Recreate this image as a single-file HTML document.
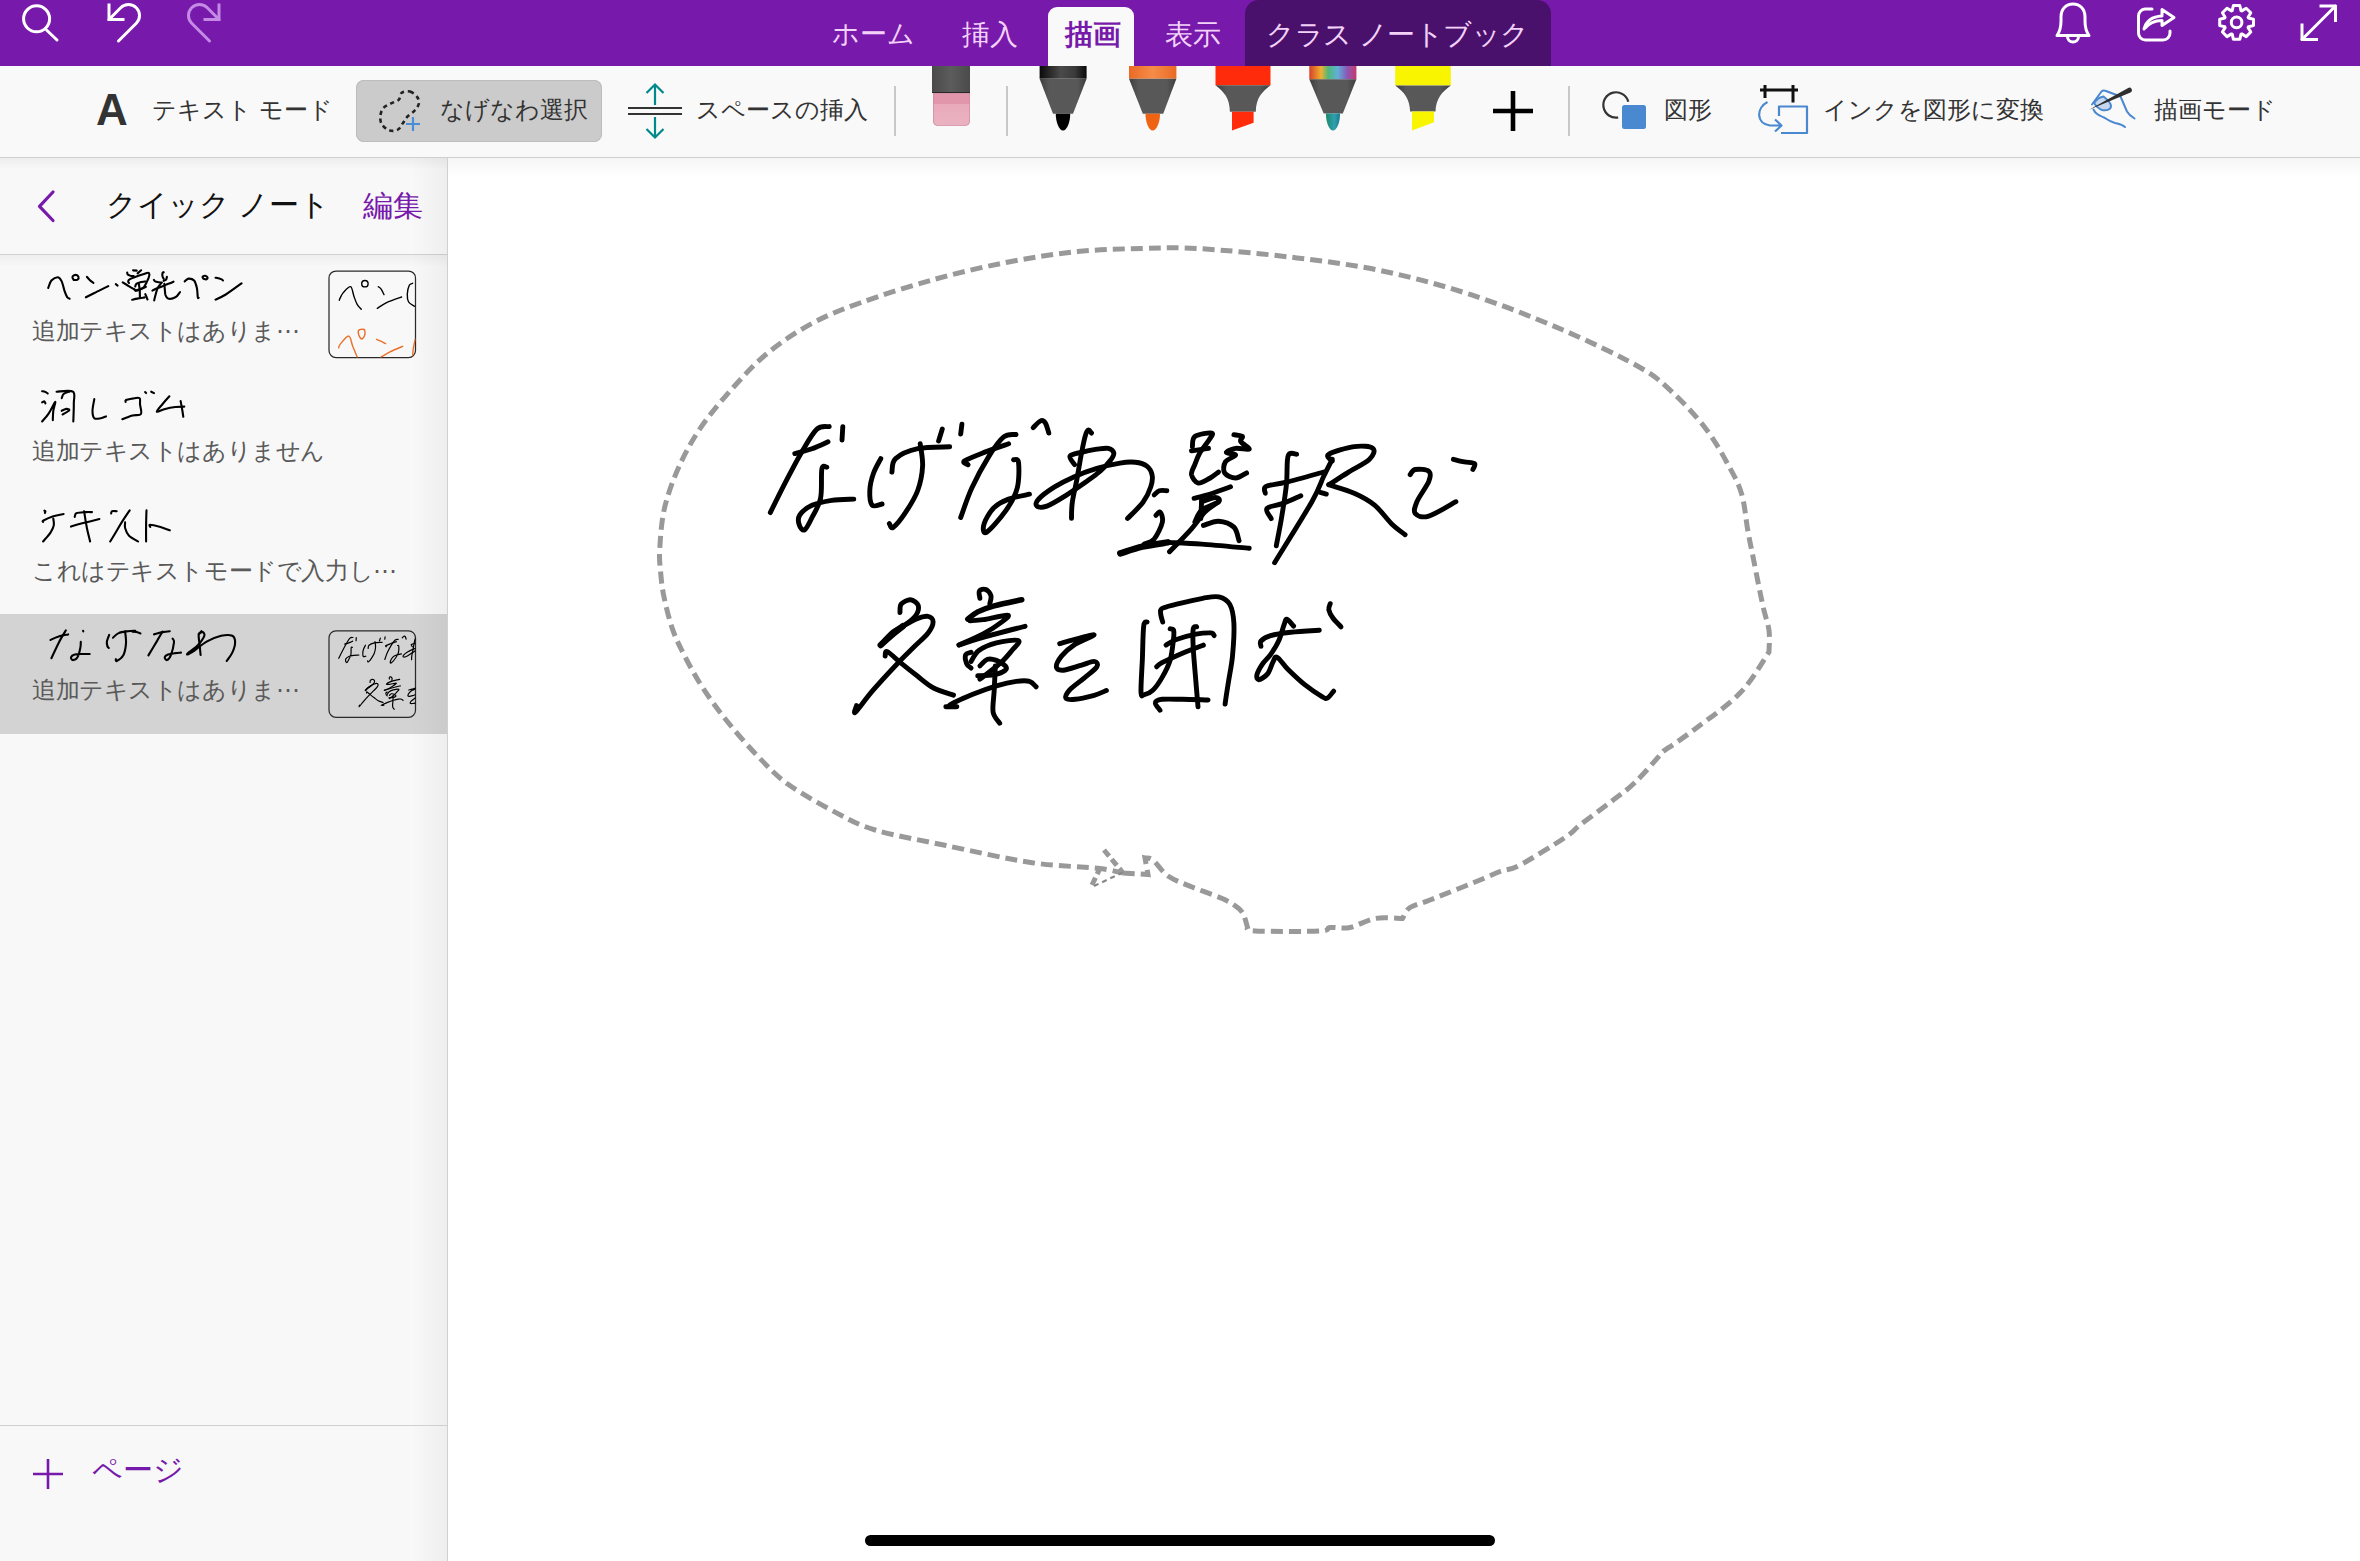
<!DOCTYPE html>
<html lang="ja">
<head>
<meta charset="utf-8">
<style>
html,body{margin:0;padding:0;width:2360px;height:1561px;overflow:hidden;background:#fff;font-family:"Liberation Sans",sans-serif;}
.abs{position:absolute;}
.t{position:absolute;white-space:nowrap;line-height:1;}
#top{left:0;top:0;width:2360px;height:66px;background:#7719aa;}
#tb{left:0;top:66px;width:2360px;height:91px;background:#f9f9f9;}
#tbline{left:0;top:157px;width:2360px;height:1px;background:#cfcfcf;}
#side{left:0;top:158px;width:447px;height:1403px;background:#f8f8f8;}
#sideborder{left:447px;top:158px;width:1px;height:1403px;background:#d0d0d0;}
.tab{font-size:28px;color:#f3d2fa;top:21px;}
.tl{font-size:24px;color:#333;top:98px;}
.sub{font-size:24px;color:#5a5a5a;left:32px;letter-spacing:-0.42px;}
svg{position:absolute;overflow:visible;}
</style>
</head>
<body>
<div id="top" class="abs"></div>
<div class="abs" style="left:1245px;top:0;width:306px;height:66px;background:#4a116c;border-radius:14px 14px 0 0;"></div>
<div class="abs" style="left:1048px;top:7px;width:86px;height:59px;background:#f9f9f9;border-radius:9px 9px 0 0;"></div>
<div class="t tab" style="left:832px;font-size:27px;">ホーム</div>
<div class="t tab" style="left:962px;">挿入</div>
<div class="t tab" style="left:1065px;color:#7719aa;font-weight:700;">描画</div>
<div class="t tab" style="left:1165px;">表示</div>
<div class="t tab" style="left:1266px;font-size:27.5px;letter-spacing:-0.5px;">クラス ノートブック</div>

<!-- top icons -->
<svg width="2360" height="66" style="left:0;top:0" fill="none" stroke="#fff" stroke-width="3" stroke-linecap="round">
  <circle cx="36.6" cy="18.8" r="13"/>
  <path d="M46.5 30 L57 40"/>
  <path d="M109 3.5 V19.5 H124.5" stroke-linecap="butt"/>
  <path d="M109 19.5 L120.7 7.7 A11 11 0 0 1 136.3 23.3 L118.5 41"/>
  <g stroke="#c48ae6">
  <path d="M219 3.5 V19.5 H203.5" stroke-linecap="butt"/>
  <path d="M219 19.5 L207.3 7.7 A11 11 0 0 0 191.7 23.3 L209.5 41"/>
  </g>
</svg>

<svg width="2360" height="66" style="left:0;top:0" fill="none" stroke="#fff" stroke-width="3" stroke-linecap="round" stroke-linejoin="round">
  <path d="M2057 35.5 C2059.5 32 2061 28 2061 21 V17 C2061 9 2066 4 2073 4 C2080 4 2085 9 2085 17 V21 C2085 28 2086.5 32 2089 35.5 Z"/>
  <path d="M2067.5 36.5 A5.5 5.5 0 0 0 2078.5 36.5"/>
  <path d="M2152 9 H2145 A7 7 0 0 0 2138.5 16 V33 A7 7 0 0 0 2145.5 40 H2163 A7 7 0 0 0 2170 33 V31"/>
  <path d="M2144 29 C2146 21.5 2152 16.5 2162 16 V9.5 L2174 17.5 L2162 25.5 V20.5 C2155 20.5 2149 23 2144 29 Z"/>
  <path d="M2232.2 10.6 L2233.4 5.5 L2239.8 5.5 L2241.0 10.6 L2241.8 10.9 L2246.2 8.2 L2250.8 12.8 L2248.1 17.2 L2248.4 18.0 L2253.5 19.2 L2253.5 25.6 L2248.4 26.8 L2248.1 27.6 L2250.8 32.0 L2246.2 36.6 L2241.8 33.9 L2241.0 34.2 L2239.8 39.3 L2233.4 39.3 L2232.2 34.2 L2231.4 33.9 L2227.0 36.6 L2222.4 32.0 L2225.1 27.6 L2224.8 26.8 L2219.7 25.6 L2219.7 19.2 L2224.8 18.0 L2225.1 17.2 L2222.4 12.8 L2227.0 8.2 L2231.4 10.9 Z"/>
  <circle cx="2236.6" cy="22.4" r="5.3"/>
  <path d="M2302 39.5 L2335.5 6"/>
  <path d="M2319.5 6 H2335.5 V22" stroke-linecap="butt"/>
  <path d="M2302 23.5 V39.5 H2318" stroke-linecap="butt"/>
</svg>
<div id="tb" class="abs"></div>
<div id="tbline" class="abs"></div>
<div id="side" class="abs"></div>
<div id="sideborder" class="abs"></div>
<div class="abs" style="left:448px;top:158px;width:1912px;height:20px;background:linear-gradient(180deg,rgba(0,0,0,0.035),rgba(0,0,0,0));"></div>
<div class="abs" style="left:0;top:158px;width:447px;height:12px;background:linear-gradient(180deg,rgba(0,0,0,0.045),rgba(0,0,0,0));"></div>
<div class="abs" style="left:0;top:255px;width:447px;height:12px;background:linear-gradient(180deg,rgba(0,0,0,0.04),rgba(0,0,0,0));"></div>


<!-- toolbar -->
<div class="t" style="left:96px;top:88px;font-size:44px;font-weight:700;color:#333;">A</div>
<div class="t tl" style="left:152px;">テキスト モード</div>
<div class="abs" style="left:356px;top:80px;width:246px;height:62px;background:#cbcbcb;border-radius:8px;box-shadow:inset 0 0 0 1px #bdbdbd;"></div>
<div class="t tl" style="left:440px;">なげなわ選択</div>
<div class="t tl" style="left:696px;">スペースの挿入</div>
<div class="t tl" style="left:1664px;">図形</div>
<div class="t tl" style="left:1823px;">インクを図形に変換</div>
<div class="t tl" style="left:2154px;">描画モード</div>


<svg width="2360" height="160" style="left:0;top:0" fill="none">
  <!-- lasso -->
  <path d="M410.0 91.5 C412.6 92.2 415.6 94.9 417.1 96.9 C418.6 98.9 419.3 101.1 418.9 103.4 C418.5 105.7 416.6 108.3 414.7 110.5 C412.8 112.7 409.6 114.3 407.6 116.4 C405.7 118.5 404.6 120.8 403.0 123.0 C401.4 125.2 400.3 128.2 398.1 129.5 C395.9 130.8 392.5 131.3 389.8 130.5 C387.1 129.7 383.7 127.0 382.1 124.7 C380.5 122.4 380.1 119.2 380.3 116.4 C380.5 113.6 381.5 110.3 383.3 108.1 C385.1 105.9 388.4 104.8 391.0 103.4 C393.6 102.0 396.9 101.6 398.7 99.8 C400.5 98.0 399.8 94.1 401.7 92.7 C403.6 91.3 407.4 90.8 410.0 91.5 Z" stroke="#222" stroke-width="2.6" stroke-dasharray="4.2 3.6"/>
  <path d="M406 124 H420 M413 117 V131" stroke="#4a8fd6" stroke-width="2.2"/>
  <!-- space -->
  <path d="M628 108 H682 M628 114 H682" stroke="#333" stroke-width="2"/>
  <path d="M655 84.5 V105 M646.5 93 L655 84.5 L663.5 93 M655 117 V137.5 M646.5 129 L655 137.5 L663.5 129" stroke="#00898a" stroke-width="2.2"/>
  <!-- separators -->
  <path d="M895 86 V136 M1007 86 V136 M1569 86 V136" stroke="#c8c8c8" stroke-width="2"/>
  <!-- plus -->
  <path d="M1493 111 H1533 M1513 91 V131" stroke="#000" stroke-width="4.6"/>
  <!-- shapes -->
  <path d="M1628.3 101.7 A12.7 12.7 0 1 0 1618.2 117.5" stroke="#333" stroke-width="2.2"/>
  <rect x="1622" y="105" width="24" height="24" rx="2.5" fill="#4a88d0"/>
  <!-- ink to shape -->
  <path d="M1760 90 H1798 M1765 85 V98 M1793 85 V102.5" stroke="#111" stroke-width="3"/>
  <path d="M1767.5 102 C1756 108 1756 124 1770 125.5 L1781 125.5 M1775 119.5 L1781.5 125.5 L1775 131.5 M1779 116 V106.5 H1807 V133 H1781" stroke="#4a88d0" stroke-width="2.2" stroke-linejoin="round"/>
  <!-- draw mode -->
  <path d="M2092 104.5 L2101.5 91.5 C2102.5 90.5 2104 90.2 2106 91 L2120.5 96.5 C2123 102 2125 107 2127 111.5 C2129 115 2132 117 2134.5 118.5" stroke="#4a88d0" stroke-width="2" stroke-linejoin="round" stroke-linecap="round"/>
  <path d="M2093.5 109.5 C2095 113 2097 114.5 2105 118 C2108 120 2110 121.5 2115 123 C2119 124 2122 124.5 2125 127" stroke="#4a88d0" stroke-width="2" stroke-linecap="round"/>
  <path d="M2094 103 C2097 99 2100 97 2103.5 96.5 C2108 100 2111 103 2111 106 C2111 109.5 2107 111 2102 110 C2099 109 2096 106 2094 103 Z" fill="#c7d8ee" stroke="#4a88d0" stroke-width="2"/>
  <path d="M2089 109.8 L2128.2 87.9 A2.5 2.5 0 0 1 2130.5 92.4 Z" fill="#2e2e2e"/>
</svg>
<!-- eraser -->
<div class="abs" style="left:932px;top:66px;width:38px;height:27px;background:linear-gradient(90deg,#4a4a4a,#5c5c5c 50%,#4a4a4a);border-bottom:1px solid #2a2a2a;box-sizing:border-box;"></div>
<div class="abs" style="left:932.5px;top:93px;width:37px;height:33px;background:linear-gradient(180deg,#e196ab 0,#e196ab 11px,#e9aabb 11px,#eab3c2 100%);border-radius:0 0 5px 5px;box-shadow:inset 0 0 0 0.6px #c98a9b;"></div>
<!-- pens -->
<svg width="2360" height="160" style="left:0;top:0">
  <defs>
    <linearGradient id="gblk" x1="0" x2="1"><stop offset="0" stop-color="#0a0a0a"/><stop offset="0.45" stop-color="#4a4a4a"/><stop offset="0.75" stop-color="#3a3a3a"/><stop offset="1" stop-color="#0a0a0a"/></linearGradient>
    <linearGradient id="gcone" x1="0" x2="1"><stop offset="0" stop-color="#3e3e3e"/><stop offset="0.2" stop-color="#585858"/><stop offset="0.8" stop-color="#585858"/><stop offset="1" stop-color="#3e3e3e"/></linearGradient>
    <linearGradient id="gorg" x1="0" x2="1"><stop offset="0" stop-color="#ea6a25"/><stop offset="0.5" stop-color="#f58c48"/><stop offset="1" stop-color="#ea6a25"/></linearGradient>
    <linearGradient id="grain" x1="0" x2="1"><stop offset="0" stop-color="#d8402a"/><stop offset="0.25" stop-color="#f0b030"/><stop offset="0.4" stop-color="#50b878"/><stop offset="0.6" stop-color="#60b0d8"/><stop offset="0.8" stop-color="#8a58b8"/><stop offset="1" stop-color="#c83868"/></linearGradient>
    <linearGradient id="gteal" x1="0" x2="1"><stop offset="0" stop-color="#1a8a6a"/><stop offset="0.6" stop-color="#30a0b0"/><stop offset="1" stop-color="#1a7a90"/></linearGradient>
  </defs>
  <rect x="1039.6" y="66" width="47" height="12.7" fill="url(#gblk)"/>
  <path d="M1039.6 78.7 H1086.6 L1073 113.7 H1053 Z" fill="url(#gcone)"/>
  <path d="M1055.8 113.7 H1070.2 C1070.5 121 1067 130.5 1063 130.5 C1059 130.5 1055.5 121 1055.8 113.7 Z" fill="#000"/>
  <rect x="1129" y="66" width="47.4" height="12.7" fill="url(#gorg)"/>
  <path d="M1129 78.7 H1176.4 L1163.2 113.7 H1142.8 Z" fill="url(#gcone)"/>
  <path d="M1145.5 113.7 H1160 C1160.3 121 1156.7 130.5 1152.7 130.5 C1148.7 130.5 1145.2 121 1145.5 113.7 Z" fill="#ee6414"/>
  <rect x="1215.5" y="66" width="55" height="19.3" fill="#ff2b0b"/>
  <path d="M1215.5 85.3 H1270.5 C1262 92 1256 98 1255.8 111.8 H1229.9 C1229.7 98 1224 92 1215.5 85.3 Z" fill="url(#gcone)"/>
  <path d="M1232 111.8 H1253.6 V122.8 L1232 130.5 Z" fill="#ff2b0b"/>
  <rect x="1309.3" y="66" width="47.1" height="13.3" fill="url(#grain)"/>
  <path d="M1309.3 79.3 H1356.4 L1342.8 113.4 H1323.7 Z" fill="url(#gcone)"/>
  <path d="M1326 113.4 H1340 C1340.3 121 1337 130.5 1333 130.5 C1329 130.5 1325.7 121 1326 113.4 Z" fill="url(#gteal)"/>
  <rect x="1395.2" y="66" width="55.6" height="19.4" fill="#f9f500"/>
  <path d="M1395.2 85.4 H1450.8 C1442 92 1436 98 1435.5 111.5 H1410.1 C1409.6 98 1404 92 1395.2 85.4 Z" fill="url(#gcone)"/>
  <path d="M1412 111.5 H1434 V122.3 L1412 130.5 Z" fill="#f9f500"/>
</svg>

<!-- sidebar -->
<div class="t" style="left:106px;top:190px;font-size:30px;color:#111;">クイック ノート</div>
<div class="t" style="left:363px;top:191px;font-size:30px;color:#7719aa;">編集</div>
<div class="abs" style="left:0;top:254px;width:447px;height:1px;background:#d0d0d0;"></div>
<div class="abs" style="left:0;top:614px;width:447px;height:120px;background:#d3d3d3;"></div>
<div class="abs" style="left:412px;top:158px;width:35px;height:1403px;background:linear-gradient(90deg,rgba(0,0,0,0),rgba(0,0,0,0.04));"></div>
<div class="t sub" style="top:319px;">追加テキストはありま⋯</div>
<div class="t sub" style="top:439px;">追加テキストはありません</div>
<div class="t sub" style="top:559px;">これはテキストモードで入力し⋯</div>
<div class="t sub" style="top:678px;">追加テキストはありま⋯</div>
<div class="abs" style="left:0;top:1425px;width:447px;height:1px;background:#d0d0d0;"></div>
<div class="t" style="left:92px;top:1455px;font-size:30px;color:#7719aa;">ページ</div>


<svg width="448" height="1561" style="left:0;top:0" fill="none">
  <path d="M53 192 L39.5 206.3 L53 220.5" stroke="#7719aa" stroke-width="3.2" stroke-linecap="round" stroke-linejoin="round"/>
  <path d="M33 1474 H63 M48 1459 V1489" stroke="#7719aa" stroke-width="2.6"/>
  <rect x="329" y="271" width="86.5" height="86.5" rx="7" stroke="#2a2a2a" stroke-width="1.25"/>
  <rect x="329" y="630.8" width="86.5" height="86.5" rx="7" stroke="#2a2a2a" stroke-width="1.25"/>
</svg>
<!--SIDE-->
<svg width="448" height="1561" style="left:0;top:0" fill="none" stroke-linecap="round" stroke-linejoin="round">
<defs><clipPath id="cp1"><rect x="329" y="271" width="86.5" height="86.5" rx="7"/></clipPath><clipPath id="cp4"><rect x="329" y="630.8" width="86.5" height="86.5" rx="7"/></clipPath></defs>
<g stroke="#000" stroke-width="2.1">
<path d="M48.2 288.0 C48.7 286.7 49.8 282.3 51.4 280.5 C53.1 278.7 56.3 277.1 58.0 277.2 C59.7 277.4 60.6 279.2 61.7 281.4 C62.8 283.7 63.6 288.1 64.5 290.8 C65.4 293.4 66.4 296.0 67.3 297.3 C68.1 298.6 69.2 298.5 69.6 298.7"/>
<path d="M73.8 280.0 C73.6 279.5 72.1 277.6 72.4 276.8 C72.7 275.9 74.7 274.9 75.7 274.9 C76.7 274.9 78.2 276.0 78.5 276.8 C78.8 277.6 78.3 279.0 77.5 279.6 C76.8 280.1 74.4 280.0 73.8 280.0"/>
<path d="M86.9 276.8 C87.3 277.3 88.6 279.0 89.7 280.0 C90.7 281.1 92.8 282.4 93.4 282.8"/>
<path d="M85.9 297.3 C87.5 296.5 91.5 294.5 95.3 292.6 C99.0 290.8 106.1 287.2 108.3 286.1"/>
<path d="M115.8 284.2 L117.6 285.6"/>
<path d="M184.7 281.4 C185.4 281.0 186.9 278.8 188.5 278.6 C190.0 278.5 192.7 279.0 194.1 280.5 C195.5 282.1 196.2 285.2 196.9 288.0 C197.5 290.8 197.5 295.7 197.8 297.3 C198.1 298.9 198.6 297.7 198.7 297.8"/>
<path d="M203.4 278.6 C203.2 278.3 202.1 277.2 202.5 276.8 C202.8 276.3 204.4 275.7 205.3 275.8 C206.1 276.0 207.4 277.1 207.6 277.7 C207.7 278.3 206.9 279.2 206.2 279.4 C205.5 279.5 203.9 278.8 203.4 278.6"/>
<path d="M215.5 277.7 C216.4 277.9 219.9 278.6 221.1 279.1 C222.3 279.6 222.7 280.3 223.0 280.5"/>
<path d="M215.5 299.6 C217.2 298.8 221.4 297.2 225.8 294.5 C230.1 291.8 239.0 285.2 241.6 283.3"/>
<path d="M127.2 272.5 C127.3 272.9 127.2 274.1 127.8 274.6 C128.3 275.1 129.5 275.5 130.5 275.8 C131.4 276.0 133.2 276.0 133.7 276.1"/>
<path d="M133.1 270.4 L136.7 270.6"/>
<path d="M137.6 273.4 L141.1 270.3"/>
<path d="M129.0 282.9 C128.8 282.7 127.9 282.1 128.1 281.4 C128.2 280.8 128.6 279.8 129.9 279.1 C131.1 278.3 133.6 277.5 135.8 276.7 C138.0 275.9 141.2 274.9 143.2 274.3 C145.2 273.7 146.9 272.8 148.0 272.8 C149.0 272.8 149.3 273.5 149.4 274.3 C149.5 275.1 149.0 276.5 148.6 277.9 C148.1 279.2 147.2 281.1 146.5 282.6 C145.7 284.1 145.0 285.7 144.1 286.8 C143.2 287.9 142.5 288.5 141.1 289.1 C139.8 289.8 136.9 290.6 135.8 290.6 C134.7 290.7 134.8 289.6 134.6 289.4"/>
<path d="M122.7 282.3 C123.4 282.8 125.5 284.1 126.9 285.0 C128.3 285.9 130.0 286.8 131.3 287.7 C132.7 288.5 134.6 289.6 135.2 290.0"/>
<path d="M135.2 286.5 C135.4 286.0 135.5 284.5 136.4 283.8 C137.2 283.1 138.8 282.7 140.2 282.3 C141.7 281.9 144.2 281.6 145.0 281.4"/>
<path d="M138.8 283.8 C138.9 284.8 139.5 287.4 139.7 289.7 C139.9 292.1 139.9 296.6 139.9 298.0"/>
<path d="M132.2 299.8 C133.1 299.6 135.2 299.0 137.3 298.6 C139.4 298.2 143.5 297.6 144.7 297.4"/>
<path d="M145.3 294.2 C145.5 294.6 146.1 296.0 146.5 296.8 C146.8 297.7 147.3 299.1 147.5 299.5"/>
<path d="M135.8 290.6 C136.8 290.3 140.0 289.2 141.7 288.5 C143.4 287.9 145.2 287.1 145.9 286.8"/>
<path d="M163.7 272.2 C163.5 272.4 162.7 272.4 162.5 273.1 C162.3 273.8 162.3 275.4 162.5 276.4 C162.7 277.3 163.5 278.4 163.7 278.8"/>
<path d="M166.9 276.7 C166.8 277.2 166.6 279.0 166.1 279.6 C165.5 280.3 164.1 280.6 163.7 280.8"/>
<path d="M153.9 279.9 C154.1 280.2 154.2 281.0 155.1 281.4 C155.9 281.8 157.8 282.1 158.9 282.3 C160.1 282.5 161.4 282.6 161.9 282.6"/>
<path d="M152.4 290.6 C153.1 290.3 154.9 289.3 156.6 288.5 C158.2 287.8 160.5 287.0 162.5 286.2 C164.5 285.4 166.6 284.5 168.4 283.8 C170.3 283.1 172.6 282.1 173.5 281.7"/>
<path d="M161.0 283.5 C160.5 284.2 158.6 286.2 157.7 287.9 C156.9 289.7 156.3 292.1 155.7 294.2 C155.1 296.3 154.4 299.4 154.2 300.4"/>
<path d="M164.3 283.8 C164.4 284.9 164.7 288.4 164.9 290.3 C165.1 292.2 165.0 293.7 165.5 295.1 C166.0 296.4 166.7 297.7 167.8 298.3 C168.9 298.9 170.5 299.0 172.0 298.6 C173.5 298.3 175.4 297.3 176.7 296.3 C178.1 295.2 179.4 292.8 180.0 292.1"/>
<path d="M42.1 391.2 C42.6 391.3 44.0 391.3 44.9 391.7 C45.8 392.0 47.2 393.2 47.7 393.5"/>
<path d="M42.1 402.4 C42.5 402.2 43.9 401.3 44.4 401.4 C45.0 401.6 45.2 403.0 45.4 403.3"/>
<path d="M42.1 421.5 C43.2 420.2 46.5 416.8 48.6 413.6 C50.8 410.3 54.4 402.4 55.2 401.9 C55.9 401.4 53.7 407.7 53.3 410.8 C52.9 413.8 52.9 418.5 52.8 420.1"/>
<path d="M56.6 391.7 C59.3 391.7 70.0 389.7 72.9 391.7 C75.8 393.6 73.7 398.3 73.8 403.3 C73.9 408.3 73.4 418.5 73.3 421.5"/>
<path d="M61.7 398.2 C62.0 397.5 62.3 395.1 63.6 394.0 C64.8 392.9 68.2 392.0 69.2 391.7"/>
<path d="M61.7 410.8 C62.5 410.5 65.1 409.0 66.4 408.9 C67.6 408.8 69.8 409.4 69.2 410.3 C68.5 411.2 63.7 413.8 62.6 414.5"/>
<path d="M94.3 399.1 C94.0 401.1 92.5 407.6 92.5 410.8 C92.5 413.9 92.9 417.0 94.3 418.2 C95.7 419.5 98.9 418.5 100.8 418.2 C102.8 417.9 105.1 416.7 106.0 416.4"/>
<path d="M125.6 401.9 C125.6 401.6 124.9 400.6 126.0 400.0 C127.2 399.5 130.3 399.0 132.5 398.6 C134.8 398.3 138.3 397.2 139.5 398.2 C140.8 399.1 139.8 401.6 140.0 404.2 C140.2 406.9 142.2 412.2 140.9 414.0 C139.7 415.9 135.6 414.6 132.5 415.4 C129.4 416.3 124.0 418.5 122.3 419.2"/>
<path d="M145.1 392.1 L146.1 393.1"/>
<path d="M151.2 391.7 L154.0 393.1"/>
<path d="M169.4 396.3 C168.2 397.6 164.5 401.7 162.4 404.2 C160.3 406.8 156.3 410.9 156.8 411.7 C157.2 412.5 162.1 409.7 165.2 408.9 C168.3 408.1 172.2 407.4 175.4 407.0 C178.6 406.6 182.8 406.6 184.3 406.6"/>
<path d="M180.6 401.0 C180.8 402.1 181.5 405.3 181.9 408.0 C182.4 410.6 183.1 415.3 183.3 416.8"/>
<path d="M44.4 510.7 C44.6 510.8 45.3 510.8 45.4 511.2 C45.5 511.6 45.0 512.7 44.9 513.1"/>
<path d="M43.1 521.9 C43.1 521.7 41.8 521.4 43.5 520.5 C45.2 519.6 50.0 517.4 53.3 516.3 C56.6 515.2 61.9 514.4 63.6 514.0"/>
<path d="M53.3 518.6 C53.4 519.7 54.2 522.8 53.8 525.2 C53.3 527.5 52.3 529.9 50.5 532.6 C48.7 535.3 44.3 540.0 43.1 541.5"/>
<path d="M74.7 516.8 C75.1 516.2 74.7 513.8 76.6 513.1 C78.5 512.3 83.4 512.3 85.9 512.1 C88.5 512.0 91.0 512.1 92.0 512.1"/>
<path d="M71.0 526.6 C72.9 526.0 77.5 524.5 82.2 523.3 C86.9 522.1 96.6 519.8 99.4 519.1"/>
<path d="M84.1 511.2 C84.5 514.0 85.9 522.9 86.9 528.0 C87.9 533.0 89.6 539.2 90.1 541.5"/>
<path d="M111.1 513.5 C111.3 513.1 111.1 511.6 112.0 511.2 C113.0 510.8 115.9 511.2 116.7 511.2"/>
<path d="M129.7 510.3 C128.5 512.1 124.5 518.0 122.3 521.4 C120.1 524.9 118.7 527.4 116.7 530.8 C114.7 534.1 111.3 539.7 110.2 541.5"/>
<path d="M125.1 522.4 C125.1 523.3 124.5 525.8 125.1 528.0 C125.7 530.1 126.6 533.2 128.8 535.4 C131.0 537.7 136.6 540.5 138.1 541.5"/>
<path d="M146.5 510.3 C146.4 512.9 146.1 520.9 146.1 526.1 C146.0 531.3 146.1 538.9 146.1 541.5"/>
<path d="M150.3 527.0 C150.3 526.6 148.5 524.7 150.3 524.7 C152.0 524.7 157.2 526.1 160.5 527.0 C163.8 528.0 168.3 529.8 169.8 530.3"/>
<path d="M50.5 640.0 C51.8 639.5 55.0 637.7 58.0 636.8 C60.9 635.8 66.5 634.8 68.2 634.4"/>
<path d="M65.9 630.3 C64.7 632.3 61.3 637.7 58.9 642.4 C56.5 647.0 52.7 655.6 51.4 658.2"/>
<path d="M83.1 630.7 L83.3 631.4"/>
<path d="M80.8 641.9 C80.7 642.9 80.9 645.4 80.3 648.0 C79.8 650.5 78.8 655.3 77.5 657.3 C76.3 659.3 74.0 660.1 72.9 660.1 C71.8 660.1 70.7 658.2 71.0 657.3 C71.3 656.4 72.9 655.0 74.7 654.5 C76.6 653.9 79.7 654.1 82.2 654.0 C84.7 653.9 88.4 654.0 89.7 654.0"/>
<path d="M109.2 634.9 C108.8 636.0 107.2 639.6 106.9 641.4 C106.6 643.3 107.1 645.0 107.4 646.1 C107.7 647.2 108.5 647.7 108.8 648.0"/>
<path d="M113.0 637.7 C113.9 636.9 116.1 634.1 118.6 633.1 C121.0 632.0 125.1 631.6 127.9 631.2 C130.7 630.8 134.1 630.8 135.3 630.7"/>
<path d="M125.1 631.2 C125.2 633.2 126.3 639.3 126.0 643.3 C125.7 647.3 124.8 652.5 123.2 655.4 C121.7 658.4 117.9 660.4 116.7 661.0 C115.5 661.6 115.9 659.5 115.8 659.2"/>
<path d="M132.5 631.7 C133.2 631.7 135.0 631.8 136.3 632.1 C137.6 632.4 139.8 633.3 140.5 633.5"/>
<path d="M154.0 634.4 C155.4 634.1 159.7 632.7 162.4 632.1 C165.0 631.6 168.6 631.3 169.8 631.2"/>
<path d="M162.4 631.7 C161.4 633.3 159.1 637.5 156.8 641.4 C154.4 645.4 149.8 653.1 148.4 655.4"/>
<path d="M172.6 638.6 C172.9 639.3 174.3 639.6 174.0 642.4 C173.7 645.2 171.9 652.5 170.8 655.4 C169.6 658.4 168.0 659.8 167.0 660.1 C166.0 660.4 164.5 658.2 164.7 657.3 C164.9 656.4 166.2 655.2 168.0 654.5 C169.8 653.8 173.2 653.4 175.4 653.1 C177.6 652.8 180.1 652.7 181.0 652.6"/>
<path d="M201.5 631.2 C201.1 631.8 199.0 632.6 198.7 634.9 C198.4 637.2 199.4 641.8 199.7 645.2 C200.0 648.5 200.4 653.3 200.6 655.0"/>
<path d="M198.7 634.0 C199.4 633.7 201.5 631.8 202.5 632.1 C203.4 632.4 205.1 633.7 204.3 635.8 C203.5 638.0 200.4 642.4 197.8 645.2 C195.2 648.0 190.2 651.1 188.5 652.6 C186.8 654.2 186.6 654.8 187.5 654.5 C188.5 654.2 190.8 652.9 194.1 650.8 C197.3 648.6 202.6 643.9 207.1 641.4 C211.6 639.0 216.9 636.8 221.1 635.8 C225.3 634.9 230.0 634.8 232.3 635.8 C234.6 636.9 235.1 639.6 235.1 642.4 C235.1 645.2 233.7 649.5 232.3 652.6 C230.9 655.7 227.6 659.6 226.7 661.0"/>
</g>
<g clip-path="url(#cp1)" stroke-width="1.4">
<path d="M339.3 300.3 C339.4 300.0 339.3 299.6 340.0 298.3 C340.7 297.0 341.5 294.6 343.3 292.6 C345.1 290.7 348.9 286.0 350.6 286.7 C352.4 287.3 352.9 293.6 354.0 296.6 C355.1 299.6 356.1 302.5 357.3 304.6 C358.5 306.7 360.6 308.5 361.3 309.3" stroke="#000"/>
<path d="M378.3 286.7 C378.8 287.1 380.4 288.0 381.3 289.3 C382.2 290.6 383.5 293.8 384.0 294.6" stroke="#000"/>
<path d="M377.3 308.3 C378.9 307.4 382.6 304.5 386.6 302.6 C390.7 300.8 399.1 297.9 401.6 297.0" stroke="#000"/>
<path d="M412.6 283.3 C412.1 283.7 410.2 283.5 409.3 285.3 C408.4 287.1 407.4 291.2 407.3 294.0 C407.2 296.8 407.4 299.9 408.6 302.0 C409.8 304.0 413.6 305.6 414.6 306.3" stroke="#000"/>
<circle cx="364.9" cy="283.7" r="3.2" stroke="#000"/>
<path d="M338.7 347.9 C338.9 347.4 338.3 346.6 340.0 344.6 C341.7 342.6 346.5 335.7 348.6 336.0 C350.8 336.2 351.2 342.4 352.6 345.9 C354.1 349.5 356.5 355.4 357.3 357.3" stroke="#e8702a"/>
<path d="M376.6 339.3 C377.4 339.6 379.8 340.6 381.3 341.3 C382.8 342.0 384.9 343.2 385.6 343.6" stroke="#e8702a"/>
<path d="M380.6 357.3 C382.2 356.4 386.3 353.8 390.0 351.9 C393.6 350.1 400.5 347.2 402.6 346.3" stroke="#e8702a"/>
<path d="M415.3 339.3 C414.9 340.8 413.7 345.6 413.3 348.6 C412.8 351.6 412.7 355.8 412.6 357.3" stroke="#e8702a"/>
<path d="M358.5 334 C357 329 361 329 364.5 329.5 C366 334 364 338 362 339 C360 338.5 359 336 358.5 334 Z" stroke="#e8702a"/>
</g>
<g clip-path="url(#cp4)"><g transform="translate(152.3 534.25) scale(0.242)" stroke="#000" stroke-width="4.9">
<path d="M829.2 426.6 C827.2 427.0 821.5 425.0 816.9 429.1 C812.4 433.2 807.5 442.2 802.2 451.2 C796.9 460.2 790.3 472.9 785.0 483.1 C779.7 493.4 772.7 507.7 770.3 512.6"/>
<path d="M794.8 453.6 C797.7 452.8 806.5 450.7 812.0 448.7 C817.6 446.8 825.3 443.0 828.0 441.8"/>
<path d="M842.8 426.6 L842.0 440.1"/>
<path d="M826.8 467.2 C826.0 467.4 822.9 463.8 821.9 468.9 C820.8 474.0 822.3 489.8 820.6 497.9 C819.0 506.0 814.7 512.2 812.0 517.5 C809.4 522.9 806.8 528.6 804.7 529.8 C802.5 531.1 800.1 527.4 799.3 524.9 C798.4 522.5 797.6 518.4 799.7 515.1 C801.9 511.8 806.7 507.7 812.0 505.3 C817.4 502.8 824.7 501.4 831.7 500.3 C838.7 499.3 850.1 499.3 853.8 499.1"/>
<path d="M880.8 458.6 C879.6 461.0 875.3 468.0 873.5 473.3 C871.6 478.6 870.0 485.2 869.8 490.5 C869.6 495.8 870.2 503.0 872.2 505.3 C874.3 507.5 880.4 504.2 882.1 504.0"/>
<path d="M891.9 472.1 C892.5 469.8 891.3 462.5 895.6 458.6 C899.9 454.7 908.7 450.7 917.7 448.7 C926.7 446.8 944.3 447.1 949.7 446.8"/>
<path d="M920.2 443.8 C920.6 447.5 923.0 458.1 922.6 465.9 C922.2 473.7 920.6 482.7 917.7 490.5 C914.8 498.3 909.5 506.5 905.4 512.6 C901.3 518.8 895.8 525.5 893.1 527.4 C890.5 529.2 890.1 524.3 889.4 523.7"/>
<path d="M942.3 429.1 L938.6 440.9"/>
<path d="M961.9 424.2 L960.7 434.0"/>
<path d="M1016.0 434.5 C1014.0 434.9 1008.2 433.3 1003.7 436.9 C999.2 440.5 994.3 447.6 989.0 456.1 C983.7 464.6 976.5 477.8 971.8 488.1 C967.1 498.3 962.6 512.6 960.7 517.5"/>
<path d="M968.1 464.7 C967.5 464.1 961.7 463.1 964.4 461.0 C967.1 459.0 976.7 455.3 984.1 452.4 C991.4 449.5 1004.5 445.2 1008.6 443.8"/>
<path d="M1013.6 459.8 C1014.4 460.2 1017.9 457.5 1018.5 462.2 C1019.1 467.0 1019.3 480.1 1017.2 488.1 C1015.2 496.0 1011.3 502.8 1006.2 510.2 C1001.1 517.5 990.2 530.0 986.5 532.3 C982.8 534.5 982.8 527.8 984.1 523.7 C985.3 519.6 989.8 511.8 993.9 507.7 C998.0 503.6 1002.7 501.4 1008.6 499.1 C1014.6 496.9 1026.1 495.0 1029.5 494.2"/>
<path d="M1074.6 464.6 C1073.8 463.2 1068.8 458.2 1070.0 456.1 C1071.1 454.1 1077.0 453.4 1081.5 452.3 C1086.0 451.1 1092.4 449.9 1096.9 449.2 C1101.4 448.6 1105.6 447.8 1108.4 448.4 C1111.2 449.1 1113.4 451.1 1113.8 453.1 C1114.2 455.0 1112.9 457.0 1110.7 460.0 C1108.5 462.9 1105.0 467.0 1100.7 470.7 C1096.5 474.5 1091.1 478.2 1085.4 482.3 C1079.6 486.4 1072.5 491.4 1066.1 495.3 C1059.7 499.3 1051.8 504.3 1046.9 506.1 C1042.0 507.9 1038.3 507.3 1036.9 506.1 C1035.5 505.0 1035.5 502.4 1038.5 499.2 C1041.4 496.0 1048.7 490.6 1054.6 486.9 C1060.5 483.2 1066.8 480.0 1073.8 476.9 C1080.9 473.8 1089.2 470.7 1096.9 468.4 C1104.6 466.1 1113.5 464.1 1120.0 463.1 C1126.4 462.0 1130.8 461.8 1135.3 462.3 C1139.8 462.8 1144.0 463.9 1146.9 466.1 C1149.7 468.3 1151.6 471.9 1152.2 475.4 C1152.9 478.8 1152.2 482.4 1150.7 486.9 C1149.2 491.4 1146.9 497.0 1143.0 502.3 C1139.2 507.5 1130.2 515.7 1127.6 518.4"/>
<path d="M1091.5 433.1 C1091.0 432.6 1089.5 429.6 1088.4 430.0 C1087.4 430.4 1086.5 431.5 1085.4 435.4 C1084.2 439.2 1082.9 445.8 1081.5 453.1 C1080.1 460.4 1078.4 471.0 1076.9 479.2 C1075.4 487.4 1073.2 495.7 1072.3 502.3 C1071.4 508.8 1071.6 515.7 1071.5 518.4"/>
<path d="M1033.1 427.7 C1034.4 426.5 1038.7 421.5 1040.8 420.8 C1042.8 420.0 1044.0 421.0 1045.4 423.1 C1046.7 425.1 1048.3 431.4 1048.8 433.1"/>
<path d="M1154.2 494.9 C1155.1 494.2 1157.2 491.4 1159.3 490.7 C1161.4 490.0 1165.7 490.7 1166.9 490.7"/>
<path d="M1155.9 515.3 C1156.6 514.7 1159.1 511.1 1160.2 512.2 C1161.2 513.3 1163.4 517.6 1162.4 522.0 C1161.4 526.5 1157.3 535.3 1154.2 539.0 C1151.2 542.7 1145.8 543.2 1144.1 544.1"/>
<path d="M1167.8 542.4 C1173.4 542.7 1188.1 543.1 1201.7 544.1 C1215.3 545.1 1241.2 547.6 1249.2 548.3"/>
<path d="M1192.4 446.6 C1192.8 444.9 1191.7 438.7 1194.9 436.4 C1198.2 434.2 1209.6 432.3 1211.9 433.1 C1214.1 433.8 1210.5 437.4 1208.5 440.7 C1206.5 443.9 1202.3 448.6 1200.0 452.5 C1197.7 456.5 1196.3 460.7 1194.9 464.4 C1193.5 468.1 1191.0 471.5 1191.5 474.6 C1192.1 477.7 1195.2 482.5 1198.3 483.1 C1201.4 483.6 1206.8 479.8 1210.2 478.0 C1213.6 476.1 1217.2 473.0 1218.6 472.0"/>
<path d="M1191.5 450.8 L1208.5 448.3"/>
<path d="M1233.9 434.7 C1235.3 435.0 1241.2 435.3 1242.4 436.4 C1243.5 437.6 1239.5 439.4 1240.7 441.5 C1241.8 443.6 1250.0 448.0 1249.2 449.2 C1248.3 450.3 1239.4 447.7 1235.6 448.3 C1231.8 448.9 1226.3 451.4 1226.3 452.5 C1226.3 453.7 1235.7 453.5 1235.6 455.1 C1235.5 456.6 1227.3 458.9 1225.4 461.9 C1223.6 464.8 1222.9 470.2 1224.6 472.9 C1226.3 475.6 1231.9 478.0 1235.6 478.0 C1239.3 478.0 1244.8 473.7 1246.6 472.9"/>
<path d="M1194.1 498.3 C1196.8 497.6 1204.1 496.0 1210.2 494.1 C1216.2 492.1 1227.1 488.0 1230.5 486.8"/>
<path d="M1201.7 501.7 C1204.0 501.0 1212.4 497.5 1215.3 497.5 C1218.1 497.5 1220.9 499.6 1218.6 501.7 C1216.4 503.8 1205.6 506.8 1201.7 510.2 C1197.7 513.6 1196.0 520.1 1194.9 522.0"/>
<path d="M1218.6 501.7 C1216.4 503.4 1209.6 507.3 1205.1 511.9 C1200.6 516.4 1197.5 522.2 1191.5 528.8 C1185.6 535.5 1173.2 547.9 1169.5 551.7"/>
<path d="M1201.7 499.2 L1200.8 518.6"/>
<path d="M1203.4 525.4 C1205.9 524.7 1213.6 520.9 1218.6 521.2 C1223.7 521.5 1230.5 523.9 1233.9 527.1 C1237.3 530.4 1238.1 538.4 1239.0 540.7"/>
<path d="M1265.3 493.2 C1265.4 492.1 1262.6 488.3 1266.1 486.4 C1269.6 484.6 1276.8 484.6 1286.4 482.2 C1296.0 479.8 1317.5 473.7 1323.7 472.0"/>
<path d="M1296.6 454.2 C1295.2 454.5 1289.8 450.8 1288.1 455.9 C1286.4 461.0 1287.6 474.3 1286.4 484.7 C1285.3 495.2 1283.1 508.5 1281.4 518.6 C1279.7 528.8 1277.1 541.2 1276.3 545.8"/>
<path d="M1271.2 518.6 C1270.5 516.9 1265.0 511.0 1266.9 508.5 C1268.9 505.9 1277.4 505.5 1283.1 503.4 C1288.7 501.3 1297.9 497.0 1300.8 495.8"/>
<path d="M1332.2 461.0 C1331.6 459.9 1325.1 456.6 1328.8 454.2 C1332.5 451.8 1346.9 447.6 1354.2 446.6 C1361.6 445.6 1370.3 446.2 1372.9 448.3 C1375.4 450.4 1373.7 455.2 1369.5 459.3 C1365.3 463.4 1354.2 468.6 1347.5 472.9 C1340.7 477.1 1331.9 482.8 1328.8 484.7"/>
<path d="M1328.8 484.7 C1333.1 486.2 1346.6 489.8 1354.2 493.2 C1361.9 496.6 1368.4 500.0 1374.6 505.1 C1380.8 510.2 1386.4 518.8 1391.5 523.7 C1396.6 528.7 1402.8 532.9 1405.1 534.7"/>
<path d="M1332.2 459.3 C1330.8 462.1 1327.1 469.2 1323.7 476.3 C1320.3 483.3 1320.1 487.3 1311.9 501.7 C1303.7 516.1 1280.8 552.5 1274.6 562.7"/>
<path d="M1320.3 492.4 L1326.3 494.1"/>
<path d="M1410.2 474.6 C1411.0 473.7 1412.1 470.1 1415.3 469.5 C1418.4 468.9 1426.6 469.2 1428.8 471.2 C1431.1 473.2 1430.8 476.3 1428.8 481.4 C1426.8 486.4 1419.2 496.3 1416.9 501.7 C1414.7 507.1 1413.3 511.2 1415.3 513.6 C1417.2 516.0 1422.0 518.1 1428.8 516.1 C1435.6 514.1 1451.4 504.1 1455.9 501.7"/>
<path d="M1453.4 459.3 C1455.2 459.7 1460.9 461.2 1464.4 461.9 C1467.9 462.6 1473.2 462.3 1474.6 463.6 C1476.0 464.8 1473.2 468.5 1472.9 469.5"/>
<path d="M1120.3 553.4 C1124.0 552.3 1134.5 548.4 1142.4 546.6 C1150.3 544.8 1163.6 543.1 1167.8 542.4" stroke-width="6.5"/>
<path d="M900.0 612.5 C900.2 611.1 899.4 606.3 901.1 604.2 C902.9 602.1 907.7 599.6 910.5 599.8 C913.4 600.0 917.3 602.8 918.2 605.3 C919.1 607.9 918.0 612.1 916.0 615.3 C914.0 618.4 910.1 621.1 906.1 624.1 C902.1 627.0 896.0 629.4 891.8 632.9 C887.6 636.4 882.6 643.0 880.8 645.0"/>
<path d="M902.8 626.3 C905.2 625.0 912.9 620.2 917.1 618.6 C921.3 616.9 925.5 615.8 928.1 616.4 C930.8 616.9 933.1 619.1 933.1 621.9 C933.1 624.6 931.2 628.8 928.1 632.9 C925.1 636.9 920.1 641.0 914.9 646.1 C909.8 651.2 904.3 656.4 897.3 663.7 C890.3 671.1 880.0 682.1 873.1 690.2 C866.1 698.2 858.2 709.6 855.4 712.2 C852.7 714.8 856.3 706.7 856.5 705.6"/>
<path d="M885.2 656.0 C885.5 655.3 884.6 650.3 887.4 651.6 C890.1 652.9 896.7 659.7 901.7 663.7 C906.7 667.8 911.8 671.8 917.1 675.8 C922.4 679.9 927.6 684.8 933.6 688.0 C939.7 691.2 950.2 693.9 953.5 695.1"/>
<path d="M979.9 598.2 C979.8 597.0 978.4 592.5 979.4 591.0 C980.3 589.5 983.5 588.6 985.4 589.4 C987.4 590.1 990.2 593.0 990.9 595.4 C991.7 597.8 990.0 602.3 989.8 603.7"/>
<path d="M970.0 620.8 C972.2 620.6 977.0 620.6 983.2 619.7 C989.5 618.7 1004.3 614.9 1007.5 615.3 C1010.6 615.6 1006.0 618.7 1001.9 621.9 C997.9 625.0 990.4 630.1 983.2 634.0 C976.1 637.8 963.0 643.2 959.0 645.0"/>
<path d="M959.0 645.0 C963.0 643.7 972.2 640.4 983.2 637.3 C994.2 634.2 1018.1 628.1 1025.1 626.3"/>
<path d="M971.1 652.2 C970.2 652.6 966.3 653.0 965.6 654.9 C964.9 656.8 965.8 661.5 966.7 663.7 C967.6 665.9 970.4 667.4 971.1 668.1"/>
<path d="M971.1 661.5 C972.4 659.7 974.6 653.6 978.8 650.5 C983.0 647.4 989.8 644.4 996.4 642.8 C1003.1 641.1 1015.9 639.3 1018.5 640.6 C1021.0 641.9 1015.0 646.7 1011.9 650.5 C1008.7 654.4 1005.1 659.0 999.7 663.7 C994.4 668.5 983.2 676.6 979.9 679.2"/>
<path d="M979.9 665.9 C981.2 664.8 984.9 660.2 987.6 659.3 C990.4 658.4 993.5 659.3 996.4 660.4 C999.4 661.5 1003.8 664.3 1005.3 665.9 C1006.7 667.6 1007.1 668.9 1005.3 670.3 C1003.4 671.8 998.8 673.8 994.2 674.7 C989.6 675.7 980.5 675.7 977.7 675.8"/>
<path d="M945.8 706.7 C947.6 706.7 956.2 706.9 956.8 706.7 C957.3 706.5 946.5 707.6 949.1 705.6 C951.6 703.6 964.3 697.9 972.2 694.6 C980.1 691.3 989.1 688.0 996.4 685.8 C1003.8 683.6 1010.8 682.1 1016.3 681.4 C1021.8 680.6 1026.2 680.4 1029.5 681.4 C1032.8 682.3 1035.0 685.9 1036.1 686.9"/>
<path d="M995.3 665.9 C995.2 670.0 994.6 682.5 994.2 690.2 C993.9 697.9 992.2 706.7 993.1 712.2 C994.1 717.7 998.6 721.4 999.7 723.2"/>
<path d="M967.8 619.1 C969.4 617.9 973.3 614.2 977.7 611.9 C982.1 609.7 986.9 607.9 994.2 605.9 C1001.6 603.9 1017.2 600.8 1021.8 599.8" stroke-width="5.5"/>
<path d="M880.8 645.0 C882.6 643.3 888.1 638.2 891.8 635.1 C895.5 632.0 901.0 627.7 902.8 626.3" stroke-width="6.5"/>
<path d="M1059.7 643.7 C1062.0 643.1 1068.1 641.1 1073.9 639.7 C1079.7 638.2 1094.2 634.0 1094.2 634.9 C1094.2 635.8 1079.3 641.6 1073.9 645.1 C1068.5 648.6 1064.6 652.3 1061.7 655.9 C1058.8 659.5 1056.0 664.4 1056.3 666.8 C1056.5 669.2 1059.0 670.4 1063.1 670.2 C1067.1 669.9 1075.5 666.9 1080.7 665.4 C1085.9 664.0 1091.5 661.1 1094.2 661.4 C1096.9 661.6 1098.5 664.1 1096.9 666.8 C1095.4 669.5 1089.3 673.8 1084.7 677.6 C1080.2 681.5 1073.0 686.4 1069.8 689.8 C1066.7 693.2 1064.9 696.4 1065.8 698.0 C1066.7 699.5 1070.5 699.8 1075.3 699.3 C1080.0 698.9 1089.0 696.7 1094.2 695.3 C1099.4 693.8 1104.4 691.3 1106.4 690.5"/>
<path d="M1147.1 622.0 C1146.6 622.7 1144.5 620.0 1143.7 626.1 C1142.9 632.2 1142.8 647.6 1142.4 658.6 C1141.9 669.7 1140.7 686.6 1141.0 692.5 C1141.4 698.5 1142.5 694.9 1144.4 694.6 C1146.3 694.2 1149.6 693.3 1152.5 690.5 C1155.5 687.7 1159.1 682.7 1162.0 677.6 C1165.0 672.5 1168.2 666.6 1170.2 660.0 C1172.1 653.4 1173.0 643.3 1173.6 638.3 C1174.1 633.3 1174.1 631.8 1173.6 630.2 C1173.0 628.6 1170.7 629.0 1170.2 628.8"/>
<path d="M1162.7 622.0 C1162.4 620.7 1160.8 616.2 1160.7 613.9 C1160.6 611.6 1159.5 610.1 1162.0 608.5 C1164.5 606.9 1168.8 606.1 1175.6 604.4 C1182.4 602.7 1195.5 599.5 1202.7 598.3 C1209.9 597.1 1214.5 595.9 1219.0 596.9 C1223.5 598.0 1227.3 600.0 1229.8 604.4 C1232.3 608.8 1233.4 614.8 1233.9 623.4 C1234.4 632.0 1233.4 646.2 1232.5 655.9 C1231.6 665.6 1229.7 673.7 1228.5 681.7 C1227.2 689.7 1225.6 700.3 1225.1 704.1"/>
<path d="M1166.1 645.1 C1167.7 644.2 1170.6 641.5 1175.6 639.7 C1180.6 637.9 1190.1 635.4 1195.9 634.2 C1201.8 633.1 1207.8 632.7 1210.8 632.9 C1213.9 633.1 1213.7 635.1 1214.2 635.6"/>
<path d="M1156.6 666.8 C1157.5 666.1 1157.7 665.0 1162.0 662.7 C1166.3 660.5 1175.5 656.2 1182.4 653.2 C1189.3 650.3 1199.9 646.4 1203.4 645.1"/>
<path d="M1196.6 626.8 C1196.0 627.1 1193.8 625.3 1193.2 628.8 C1192.7 632.3 1192.8 639.0 1193.2 647.8 C1193.7 656.6 1195.1 671.9 1195.9 681.7 C1196.7 691.5 1197.6 702.6 1198.0 706.8"/>
<path d="M1160.0 710.2 C1159.2 708.9 1154.9 704.5 1155.3 702.7 C1155.6 700.9 1157.5 699.9 1162.0 699.3 C1166.6 698.8 1174.7 699.2 1182.4 699.3 C1190.1 699.4 1203.8 699.9 1208.1 700.0"/>
<path d="M1261.0 646.4 C1261.0 645.5 1259.4 642.8 1261.0 641.0 C1262.6 639.2 1265.5 637.1 1270.5 635.6 C1275.5 634.1 1282.7 633.1 1290.8 632.2 C1299.0 631.3 1314.6 630.5 1319.3 630.2"/>
<path d="M1293.6 626.1 C1292.4 625.0 1288.4 619.5 1286.8 619.3 C1285.2 619.1 1285.4 621.1 1284.1 624.7 C1282.7 628.4 1280.9 636.0 1278.6 641.0 C1276.4 646.0 1273.2 650.7 1270.5 654.6 C1267.8 658.4 1264.6 660.7 1262.4 664.1 C1260.1 667.5 1257.5 672.3 1256.9 674.9 C1256.4 677.5 1257.2 679.9 1259.0 679.7 C1260.8 679.4 1265.4 676.6 1267.8 673.6 C1270.2 670.5 1271.6 664.1 1273.2 661.4 C1274.8 658.6 1274.8 655.9 1277.3 657.3 C1279.8 658.6 1283.6 665.0 1288.1 669.5 C1292.7 674.0 1298.8 679.9 1304.4 684.4 C1310.1 688.9 1318.2 694.4 1322.0 696.6 C1325.9 698.9 1325.5 698.9 1327.5 698.0 C1329.4 697.1 1332.5 692.3 1333.6 691.2"/>
<path d="M1330.2 603.7 C1329.9 604.7 1328.4 607.5 1328.8 609.8 C1329.3 612.2 1330.8 615.1 1332.9 618.0 C1334.9 620.8 1339.7 625.3 1341.0 626.8"/>
</g></g>
</svg>
<!--/SIDE-->
<!--INK-->
<svg width="2360" height="1561" style="left:0;top:0" fill="none" stroke-linecap="round" stroke-linejoin="round">
<path d="M1122.7 873.0 L1148.0 874.5 L1145.0 858.0 C1146.3 858.3 1149.2 857.0 1153.0 860.0 C1156.8 863.0 1161.5 871.5 1168.0 876.0 C1174.5 880.5 1183.2 883.3 1192.0 887.0 C1200.8 890.7 1214.0 895.0 1221.0 898.0 C1228.0 901.0 1230.4 902.6 1234.0 905.0 C1237.6 907.4 1240.2 908.8 1242.5 912.5 C1244.8 916.2 1246.7 925.0 1247.5 927.5 C1248.8 928.1 1242.9 930.4 1255.0 931.0 C1267.1 931.6 1307.5 931.6 1320.0 931.0 C1332.5 930.4 1325.0 928.1 1330.0 927.5 C1335.0 926.9 1342.5 929.0 1350.0 927.5 C1357.5 926.0 1366.2 920.0 1375.0 918.5 C1383.8 917.0 1397.9 918.5 1402.5 918.5 C1403.8 916.7 1405.4 910.6 1410.0 907.5 C1414.6 904.4 1418.3 904.6 1430.0 900.0 C1441.7 895.4 1468.3 884.8 1480.0 880.0 C1491.7 875.2 1493.3 874.0 1500.0 871.5 C1506.7 869.0 1509.2 870.7 1520.0 865.0 C1530.8 859.3 1555.0 844.2 1565.0 837.5 C1575.0 830.8 1572.5 830.8 1580.0 825.0 C1587.5 819.2 1600.8 809.6 1610.0 802.5 C1619.2 795.4 1626.1 791.0 1635.0 782.5 C1643.9 774.0 1658.5 756.6 1663.2 751.4 C1668.3 747.8 1681.2 739.5 1694.1 729.7 C1707.0 719.9 1728.0 705.6 1740.5 692.6 C1753.0 679.6 1764.2 658.8 1769.0 652.0 C1769.0 648.4 1770.0 638.0 1769.0 630.4 C1768.0 622.8 1765.5 617.8 1763.0 606.3 C1760.5 594.8 1756.4 573.8 1753.9 561.2 C1751.4 548.7 1749.9 542.0 1747.9 531.0 C1745.9 520.0 1744.9 505.4 1741.9 494.9 C1738.9 484.4 1735.8 478.8 1729.8 467.8 C1723.8 456.8 1715.8 441.7 1705.8 428.7 C1695.8 415.7 1681.1 400.1 1669.6 389.6 C1658.0 379.1 1654.5 375.6 1636.5 365.5 C1618.5 355.4 1588.9 341.1 1561.3 329.3 C1533.7 317.5 1501.0 304.5 1470.9 294.7 C1440.8 284.9 1410.7 276.9 1380.6 270.6 C1350.5 264.3 1320.4 260.8 1290.3 257.1 C1260.2 253.5 1224.4 250.1 1200.0 248.7 C1175.6 247.2 1164.2 247.9 1143.8 248.4 C1123.4 248.9 1100.0 249.3 1077.5 251.6 C1055.0 253.9 1032.4 257.4 1008.6 262.0 C984.8 266.6 959.5 272.4 934.9 279.2 C910.3 285.9 881.7 295.1 861.2 302.5 C840.7 309.9 827.6 315.0 812.0 323.4 C796.4 331.8 780.9 342.2 767.8 352.9 C754.7 363.5 744.5 375.0 733.4 387.3 C722.3 399.6 710.4 413.5 701.4 426.6 C692.4 439.7 685.4 452.5 679.3 466.0 C673.2 479.5 667.9 493.8 664.6 507.7 C661.3 521.6 660.4 538.6 659.7 549.5 C659.1 560.4 660.0 565.2 660.7 573.1 C661.4 581.0 662.0 587.6 664.0 597.0 C666.0 606.4 669.1 619.5 672.7 629.7 C676.3 639.9 680.6 648.2 685.7 658.0 C690.8 667.8 696.3 678.0 703.2 688.5 C710.1 699.0 718.0 710.0 727.1 721.2 C736.2 732.5 747.4 745.5 757.6 756.0 C767.8 766.5 775.0 774.9 788.1 784.3 C801.2 793.7 821.5 805.0 836.0 812.6 C850.5 820.2 857.1 824.5 875.2 830.0 C893.4 835.5 918.8 839.8 944.9 845.3 C971.0 850.8 1006.6 858.9 1032.0 862.7 C1057.4 866.5 1082.2 866.5 1097.3 868.2 C1112.4 869.9 1118.5 872.2 1122.7 873.0" stroke="#999" stroke-width="5" stroke-dasharray="12 6" stroke-linecap="butt" stroke-linejoin="miter"/>
<path d="M1104 850 L1122.7 872.5 M1092 885 L1102 864" stroke="#999" stroke-width="5" stroke-dasharray="8 4" stroke-linecap="butt"/>
<path d="M1094 886 L1122.7 872.5" stroke="#888" stroke-width="2.2" stroke-dasharray="5 4" stroke-linecap="butt"/>
<g stroke="#000" stroke-width="4.9">
<path d="M829.2 426.6 C827.2 427.0 821.5 425.0 816.9 429.1 C812.4 433.2 807.5 442.2 802.2 451.2 C796.9 460.2 790.3 472.9 785.0 483.1 C779.7 493.4 772.7 507.7 770.3 512.6"/>
<path d="M794.8 453.6 C797.7 452.8 806.5 450.7 812.0 448.7 C817.6 446.8 825.3 443.0 828.0 441.8"/>
<path d="M842.8 426.6 L842.0 440.1"/>
<path d="M826.8 467.2 C826.0 467.4 822.9 463.8 821.9 468.9 C820.8 474.0 822.3 489.8 820.6 497.9 C819.0 506.0 814.7 512.2 812.0 517.5 C809.4 522.9 806.8 528.6 804.7 529.8 C802.5 531.1 800.1 527.4 799.3 524.9 C798.4 522.5 797.6 518.4 799.7 515.1 C801.9 511.8 806.7 507.7 812.0 505.3 C817.4 502.8 824.7 501.4 831.7 500.3 C838.7 499.3 850.1 499.3 853.8 499.1"/>
<path d="M880.8 458.6 C879.6 461.0 875.3 468.0 873.5 473.3 C871.6 478.6 870.0 485.2 869.8 490.5 C869.6 495.8 870.2 503.0 872.2 505.3 C874.3 507.5 880.4 504.2 882.1 504.0"/>
<path d="M891.9 472.1 C892.5 469.8 891.3 462.5 895.6 458.6 C899.9 454.7 908.7 450.7 917.7 448.7 C926.7 446.8 944.3 447.1 949.7 446.8"/>
<path d="M920.2 443.8 C920.6 447.5 923.0 458.1 922.6 465.9 C922.2 473.7 920.6 482.7 917.7 490.5 C914.8 498.3 909.5 506.5 905.4 512.6 C901.3 518.8 895.8 525.5 893.1 527.4 C890.5 529.2 890.1 524.3 889.4 523.7"/>
<path d="M942.3 429.1 L938.6 440.9"/>
<path d="M961.9 424.2 L960.7 434.0"/>
<path d="M1016.0 434.5 C1014.0 434.9 1008.2 433.3 1003.7 436.9 C999.2 440.5 994.3 447.6 989.0 456.1 C983.7 464.6 976.5 477.8 971.8 488.1 C967.1 498.3 962.6 512.6 960.7 517.5"/>
<path d="M968.1 464.7 C967.5 464.1 961.7 463.1 964.4 461.0 C967.1 459.0 976.7 455.3 984.1 452.4 C991.4 449.5 1004.5 445.2 1008.6 443.8"/>
<path d="M1013.6 459.8 C1014.4 460.2 1017.9 457.5 1018.5 462.2 C1019.1 467.0 1019.3 480.1 1017.2 488.1 C1015.2 496.0 1011.3 502.8 1006.2 510.2 C1001.1 517.5 990.2 530.0 986.5 532.3 C982.8 534.5 982.8 527.8 984.1 523.7 C985.3 519.6 989.8 511.8 993.9 507.7 C998.0 503.6 1002.7 501.4 1008.6 499.1 C1014.6 496.9 1026.1 495.0 1029.5 494.2"/>
<path d="M1074.6 464.6 C1073.8 463.2 1068.8 458.2 1070.0 456.1 C1071.1 454.1 1077.0 453.4 1081.5 452.3 C1086.0 451.1 1092.4 449.9 1096.9 449.2 C1101.4 448.6 1105.6 447.8 1108.4 448.4 C1111.2 449.1 1113.4 451.1 1113.8 453.1 C1114.2 455.0 1112.9 457.0 1110.7 460.0 C1108.5 462.9 1105.0 467.0 1100.7 470.7 C1096.5 474.5 1091.1 478.2 1085.4 482.3 C1079.6 486.4 1072.5 491.4 1066.1 495.3 C1059.7 499.3 1051.8 504.3 1046.9 506.1 C1042.0 507.9 1038.3 507.3 1036.9 506.1 C1035.5 505.0 1035.5 502.4 1038.5 499.2 C1041.4 496.0 1048.7 490.6 1054.6 486.9 C1060.5 483.2 1066.8 480.0 1073.8 476.9 C1080.9 473.8 1089.2 470.7 1096.9 468.4 C1104.6 466.1 1113.5 464.1 1120.0 463.1 C1126.4 462.0 1130.8 461.8 1135.3 462.3 C1139.8 462.8 1144.0 463.9 1146.9 466.1 C1149.7 468.3 1151.6 471.9 1152.2 475.4 C1152.9 478.8 1152.2 482.4 1150.7 486.9 C1149.2 491.4 1146.9 497.0 1143.0 502.3 C1139.2 507.5 1130.2 515.7 1127.6 518.4"/>
<path d="M1091.5 433.1 C1091.0 432.6 1089.5 429.6 1088.4 430.0 C1087.4 430.4 1086.5 431.5 1085.4 435.4 C1084.2 439.2 1082.9 445.8 1081.5 453.1 C1080.1 460.4 1078.4 471.0 1076.9 479.2 C1075.4 487.4 1073.2 495.7 1072.3 502.3 C1071.4 508.8 1071.6 515.7 1071.5 518.4"/>
<path d="M1033.1 427.7 C1034.4 426.5 1038.7 421.5 1040.8 420.8 C1042.8 420.0 1044.0 421.0 1045.4 423.1 C1046.7 425.1 1048.3 431.4 1048.8 433.1"/>
<path d="M1154.2 494.9 C1155.1 494.2 1157.2 491.4 1159.3 490.7 C1161.4 490.0 1165.7 490.7 1166.9 490.7"/>
<path d="M1155.9 515.3 C1156.6 514.7 1159.1 511.1 1160.2 512.2 C1161.2 513.3 1163.4 517.6 1162.4 522.0 C1161.4 526.5 1157.3 535.3 1154.2 539.0 C1151.2 542.7 1145.8 543.2 1144.1 544.1"/>
<path d="M1167.8 542.4 C1173.4 542.7 1188.1 543.1 1201.7 544.1 C1215.3 545.1 1241.2 547.6 1249.2 548.3"/>
<path d="M1192.4 446.6 C1192.8 444.9 1191.7 438.7 1194.9 436.4 C1198.2 434.2 1209.6 432.3 1211.9 433.1 C1214.1 433.8 1210.5 437.4 1208.5 440.7 C1206.5 443.9 1202.3 448.6 1200.0 452.5 C1197.7 456.5 1196.3 460.7 1194.9 464.4 C1193.5 468.1 1191.0 471.5 1191.5 474.6 C1192.1 477.7 1195.2 482.5 1198.3 483.1 C1201.4 483.6 1206.8 479.8 1210.2 478.0 C1213.6 476.1 1217.2 473.0 1218.6 472.0"/>
<path d="M1191.5 450.8 L1208.5 448.3"/>
<path d="M1233.9 434.7 C1235.3 435.0 1241.2 435.3 1242.4 436.4 C1243.5 437.6 1239.5 439.4 1240.7 441.5 C1241.8 443.6 1250.0 448.0 1249.2 449.2 C1248.3 450.3 1239.4 447.7 1235.6 448.3 C1231.8 448.9 1226.3 451.4 1226.3 452.5 C1226.3 453.7 1235.7 453.5 1235.6 455.1 C1235.5 456.6 1227.3 458.9 1225.4 461.9 C1223.6 464.8 1222.9 470.2 1224.6 472.9 C1226.3 475.6 1231.9 478.0 1235.6 478.0 C1239.3 478.0 1244.8 473.7 1246.6 472.9"/>
<path d="M1194.1 498.3 C1196.8 497.6 1204.1 496.0 1210.2 494.1 C1216.2 492.1 1227.1 488.0 1230.5 486.8"/>
<path d="M1201.7 501.7 C1204.0 501.0 1212.4 497.5 1215.3 497.5 C1218.1 497.5 1220.9 499.6 1218.6 501.7 C1216.4 503.8 1205.6 506.8 1201.7 510.2 C1197.7 513.6 1196.0 520.1 1194.9 522.0"/>
<path d="M1218.6 501.7 C1216.4 503.4 1209.6 507.3 1205.1 511.9 C1200.6 516.4 1197.5 522.2 1191.5 528.8 C1185.6 535.5 1173.2 547.9 1169.5 551.7"/>
<path d="M1201.7 499.2 L1200.8 518.6"/>
<path d="M1203.4 525.4 C1205.9 524.7 1213.6 520.9 1218.6 521.2 C1223.7 521.5 1230.5 523.9 1233.9 527.1 C1237.3 530.4 1238.1 538.4 1239.0 540.7"/>
<path d="M1265.3 493.2 C1265.4 492.1 1262.6 488.3 1266.1 486.4 C1269.6 484.6 1276.8 484.6 1286.4 482.2 C1296.0 479.8 1317.5 473.7 1323.7 472.0"/>
<path d="M1296.6 454.2 C1295.2 454.5 1289.8 450.8 1288.1 455.9 C1286.4 461.0 1287.6 474.3 1286.4 484.7 C1285.3 495.2 1283.1 508.5 1281.4 518.6 C1279.7 528.8 1277.1 541.2 1276.3 545.8"/>
<path d="M1271.2 518.6 C1270.5 516.9 1265.0 511.0 1266.9 508.5 C1268.9 505.9 1277.4 505.5 1283.1 503.4 C1288.7 501.3 1297.9 497.0 1300.8 495.8"/>
<path d="M1332.2 461.0 C1331.6 459.9 1325.1 456.6 1328.8 454.2 C1332.5 451.8 1346.9 447.6 1354.2 446.6 C1361.6 445.6 1370.3 446.2 1372.9 448.3 C1375.4 450.4 1373.7 455.2 1369.5 459.3 C1365.3 463.4 1354.2 468.6 1347.5 472.9 C1340.7 477.1 1331.9 482.8 1328.8 484.7"/>
<path d="M1328.8 484.7 C1333.1 486.2 1346.6 489.8 1354.2 493.2 C1361.9 496.6 1368.4 500.0 1374.6 505.1 C1380.8 510.2 1386.4 518.8 1391.5 523.7 C1396.6 528.7 1402.8 532.9 1405.1 534.7"/>
<path d="M1332.2 459.3 C1330.8 462.1 1327.1 469.2 1323.7 476.3 C1320.3 483.3 1320.1 487.3 1311.9 501.7 C1303.7 516.1 1280.8 552.5 1274.6 562.7"/>
<path d="M1320.3 492.4 L1326.3 494.1"/>
<path d="M1410.2 474.6 C1411.0 473.7 1412.1 470.1 1415.3 469.5 C1418.4 468.9 1426.6 469.2 1428.8 471.2 C1431.1 473.2 1430.8 476.3 1428.8 481.4 C1426.8 486.4 1419.2 496.3 1416.9 501.7 C1414.7 507.1 1413.3 511.2 1415.3 513.6 C1417.2 516.0 1422.0 518.1 1428.8 516.1 C1435.6 514.1 1451.4 504.1 1455.9 501.7"/>
<path d="M1453.4 459.3 C1455.2 459.7 1460.9 461.2 1464.4 461.9 C1467.9 462.6 1473.2 462.3 1474.6 463.6 C1476.0 464.8 1473.2 468.5 1472.9 469.5"/>
<path d="M1120.3 553.4 C1124.0 552.3 1134.5 548.4 1142.4 546.6 C1150.3 544.8 1163.6 543.1 1167.8 542.4" stroke-width="6.5"/>
<path d="M900.0 612.5 C900.2 611.1 899.4 606.3 901.1 604.2 C902.9 602.1 907.7 599.6 910.5 599.8 C913.4 600.0 917.3 602.8 918.2 605.3 C919.1 607.9 918.0 612.1 916.0 615.3 C914.0 618.4 910.1 621.1 906.1 624.1 C902.1 627.0 896.0 629.4 891.8 632.9 C887.6 636.4 882.6 643.0 880.8 645.0"/>
<path d="M902.8 626.3 C905.2 625.0 912.9 620.2 917.1 618.6 C921.3 616.9 925.5 615.8 928.1 616.4 C930.8 616.9 933.1 619.1 933.1 621.9 C933.1 624.6 931.2 628.8 928.1 632.9 C925.1 636.9 920.1 641.0 914.9 646.1 C909.8 651.2 904.3 656.4 897.3 663.7 C890.3 671.1 880.0 682.1 873.1 690.2 C866.1 698.2 858.2 709.6 855.4 712.2 C852.7 714.8 856.3 706.7 856.5 705.6"/>
<path d="M885.2 656.0 C885.5 655.3 884.6 650.3 887.4 651.6 C890.1 652.9 896.7 659.7 901.7 663.7 C906.7 667.8 911.8 671.8 917.1 675.8 C922.4 679.9 927.6 684.8 933.6 688.0 C939.7 691.2 950.2 693.9 953.5 695.1"/>
<path d="M979.9 598.2 C979.8 597.0 978.4 592.5 979.4 591.0 C980.3 589.5 983.5 588.6 985.4 589.4 C987.4 590.1 990.2 593.0 990.9 595.4 C991.7 597.8 990.0 602.3 989.8 603.7"/>
<path d="M970.0 620.8 C972.2 620.6 977.0 620.6 983.2 619.7 C989.5 618.7 1004.3 614.9 1007.5 615.3 C1010.6 615.6 1006.0 618.7 1001.9 621.9 C997.9 625.0 990.4 630.1 983.2 634.0 C976.1 637.8 963.0 643.2 959.0 645.0"/>
<path d="M959.0 645.0 C963.0 643.7 972.2 640.4 983.2 637.3 C994.2 634.2 1018.1 628.1 1025.1 626.3"/>
<path d="M971.1 652.2 C970.2 652.6 966.3 653.0 965.6 654.9 C964.9 656.8 965.8 661.5 966.7 663.7 C967.6 665.9 970.4 667.4 971.1 668.1"/>
<path d="M971.1 661.5 C972.4 659.7 974.6 653.6 978.8 650.5 C983.0 647.4 989.8 644.4 996.4 642.8 C1003.1 641.1 1015.9 639.3 1018.5 640.6 C1021.0 641.9 1015.0 646.7 1011.9 650.5 C1008.7 654.4 1005.1 659.0 999.7 663.7 C994.4 668.5 983.2 676.6 979.9 679.2"/>
<path d="M979.9 665.9 C981.2 664.8 984.9 660.2 987.6 659.3 C990.4 658.4 993.5 659.3 996.4 660.4 C999.4 661.5 1003.8 664.3 1005.3 665.9 C1006.7 667.6 1007.1 668.9 1005.3 670.3 C1003.4 671.8 998.8 673.8 994.2 674.7 C989.6 675.7 980.5 675.7 977.7 675.8"/>
<path d="M945.8 706.7 C947.6 706.7 956.2 706.9 956.8 706.7 C957.3 706.5 946.5 707.6 949.1 705.6 C951.6 703.6 964.3 697.9 972.2 694.6 C980.1 691.3 989.1 688.0 996.4 685.8 C1003.8 683.6 1010.8 682.1 1016.3 681.4 C1021.8 680.6 1026.2 680.4 1029.5 681.4 C1032.8 682.3 1035.0 685.9 1036.1 686.9"/>
<path d="M995.3 665.9 C995.2 670.0 994.6 682.5 994.2 690.2 C993.9 697.9 992.2 706.7 993.1 712.2 C994.1 717.7 998.6 721.4 999.7 723.2"/>
<path d="M967.8 619.1 C969.4 617.9 973.3 614.2 977.7 611.9 C982.1 609.7 986.9 607.9 994.2 605.9 C1001.6 603.9 1017.2 600.8 1021.8 599.8" stroke-width="5.5"/>
<path d="M880.8 645.0 C882.6 643.3 888.1 638.2 891.8 635.1 C895.5 632.0 901.0 627.7 902.8 626.3" stroke-width="6.5"/>
<path d="M1059.7 643.7 C1062.0 643.1 1068.1 641.1 1073.9 639.7 C1079.7 638.2 1094.2 634.0 1094.2 634.9 C1094.2 635.8 1079.3 641.6 1073.9 645.1 C1068.5 648.6 1064.6 652.3 1061.7 655.9 C1058.8 659.5 1056.0 664.4 1056.3 666.8 C1056.5 669.2 1059.0 670.4 1063.1 670.2 C1067.1 669.9 1075.5 666.9 1080.7 665.4 C1085.9 664.0 1091.5 661.1 1094.2 661.4 C1096.9 661.6 1098.5 664.1 1096.9 666.8 C1095.4 669.5 1089.3 673.8 1084.7 677.6 C1080.2 681.5 1073.0 686.4 1069.8 689.8 C1066.7 693.2 1064.9 696.4 1065.8 698.0 C1066.7 699.5 1070.5 699.8 1075.3 699.3 C1080.0 698.9 1089.0 696.7 1094.2 695.3 C1099.4 693.8 1104.4 691.3 1106.4 690.5"/>
<path d="M1147.1 622.0 C1146.6 622.7 1144.5 620.0 1143.7 626.1 C1142.9 632.2 1142.8 647.6 1142.4 658.6 C1141.9 669.7 1140.7 686.6 1141.0 692.5 C1141.4 698.5 1142.5 694.9 1144.4 694.6 C1146.3 694.2 1149.6 693.3 1152.5 690.5 C1155.5 687.7 1159.1 682.7 1162.0 677.6 C1165.0 672.5 1168.2 666.6 1170.2 660.0 C1172.1 653.4 1173.0 643.3 1173.6 638.3 C1174.1 633.3 1174.1 631.8 1173.6 630.2 C1173.0 628.6 1170.7 629.0 1170.2 628.8"/>
<path d="M1162.7 622.0 C1162.4 620.7 1160.8 616.2 1160.7 613.9 C1160.6 611.6 1159.5 610.1 1162.0 608.5 C1164.5 606.9 1168.8 606.1 1175.6 604.4 C1182.4 602.7 1195.5 599.5 1202.7 598.3 C1209.9 597.1 1214.5 595.9 1219.0 596.9 C1223.5 598.0 1227.3 600.0 1229.8 604.4 C1232.3 608.8 1233.4 614.8 1233.9 623.4 C1234.4 632.0 1233.4 646.2 1232.5 655.9 C1231.6 665.6 1229.7 673.7 1228.5 681.7 C1227.2 689.7 1225.6 700.3 1225.1 704.1"/>
<path d="M1166.1 645.1 C1167.7 644.2 1170.6 641.5 1175.6 639.7 C1180.6 637.9 1190.1 635.4 1195.9 634.2 C1201.8 633.1 1207.8 632.7 1210.8 632.9 C1213.9 633.1 1213.7 635.1 1214.2 635.6"/>
<path d="M1156.6 666.8 C1157.5 666.1 1157.7 665.0 1162.0 662.7 C1166.3 660.5 1175.5 656.2 1182.4 653.2 C1189.3 650.3 1199.9 646.4 1203.4 645.1"/>
<path d="M1196.6 626.8 C1196.0 627.1 1193.8 625.3 1193.2 628.8 C1192.7 632.3 1192.8 639.0 1193.2 647.8 C1193.7 656.6 1195.1 671.9 1195.9 681.7 C1196.7 691.5 1197.6 702.6 1198.0 706.8"/>
<path d="M1160.0 710.2 C1159.2 708.9 1154.9 704.5 1155.3 702.7 C1155.6 700.9 1157.5 699.9 1162.0 699.3 C1166.6 698.8 1174.7 699.2 1182.4 699.3 C1190.1 699.4 1203.8 699.9 1208.1 700.0"/>
<path d="M1261.0 646.4 C1261.0 645.5 1259.4 642.8 1261.0 641.0 C1262.6 639.2 1265.5 637.1 1270.5 635.6 C1275.5 634.1 1282.7 633.1 1290.8 632.2 C1299.0 631.3 1314.6 630.5 1319.3 630.2"/>
<path d="M1293.6 626.1 C1292.4 625.0 1288.4 619.5 1286.8 619.3 C1285.2 619.1 1285.4 621.1 1284.1 624.7 C1282.7 628.4 1280.9 636.0 1278.6 641.0 C1276.4 646.0 1273.2 650.7 1270.5 654.6 C1267.8 658.4 1264.6 660.7 1262.4 664.1 C1260.1 667.5 1257.5 672.3 1256.9 674.9 C1256.4 677.5 1257.2 679.9 1259.0 679.7 C1260.8 679.4 1265.4 676.6 1267.8 673.6 C1270.2 670.5 1271.6 664.1 1273.2 661.4 C1274.8 658.6 1274.8 655.9 1277.3 657.3 C1279.8 658.6 1283.6 665.0 1288.1 669.5 C1292.7 674.0 1298.8 679.9 1304.4 684.4 C1310.1 688.9 1318.2 694.4 1322.0 696.6 C1325.9 698.9 1325.5 698.9 1327.5 698.0 C1329.4 697.1 1332.5 692.3 1333.6 691.2"/>
<path d="M1330.2 603.7 C1329.9 604.7 1328.4 607.5 1328.8 609.8 C1329.3 612.2 1330.8 615.1 1332.9 618.0 C1334.9 620.8 1339.7 625.3 1341.0 626.8"/>
</g></svg>
<!--/INK-->
<div class="abs" style="left:865px;top:1535px;width:630px;height:11px;background:#000;border-radius:6px;"></div>
</body>
</html>
